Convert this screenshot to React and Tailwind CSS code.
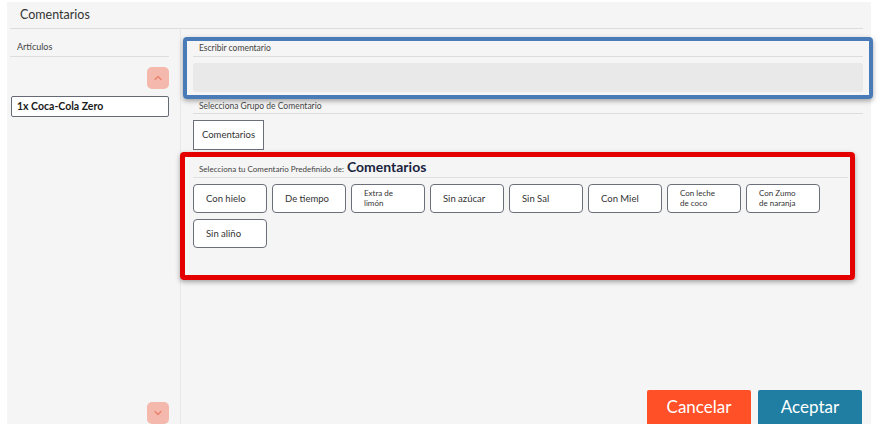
const presets = [
  ["Con hielo"],
  ["De tiempo"],
  ["Extra de", "limón"],
  ["Sin azúcar"],
  ["Sin Sal"],
  ["Con Miel"],
  ["Con leche", "de coco"],
  ["Con Zumo", "de naranja"],
  ["Sin aliño"],
];

function Chevron({ down }) {
  return (
    <svg width="10" height="6" viewBox="0 0 10 6" fill="none">
      <path
        d={down ? "M2 1.5 L5 4.5 L8 1.5" : "M2 4.5 L5 1.5 L8 4.5"}
        stroke="#e8806c"
        strokeWidth="1.3"
        strokeLinecap="round"
        strokeLinejoin="round"
      />
    </svg>
  );
}

export default function App() {
  return (
    <div
      className="min-h-[432px] bg-white pt-[2px] pl-[7px]"
      style={{ fontFamily: "Lato, 'Noto Sans', sans-serif" }}
    >
      <div className="w-[864px] h-[422px] bg-[#f5f5f5] flex flex-col text-[#333]">
        {/* Header */}
        <div className="ml-[3px] mr-[8px] h-[27px] border-b border-[#dddddd] pl-[10px] flex items-center">
          <span className="text-[12.5px]">Comentarios</span>
        </div>

        <div className="flex flex-1 min-h-0">
          {/* Left column - articles */}
          <div className="w-[174px] border-r border-[#e8e8e8] pl-[3px] pr-[11px] flex flex-col">
            <div className="h-[28px] border-b border-[#dddddd] flex items-end pb-[3px] pl-[7px]">
              <span className="text-[9px] leading-[12px] text-[#444]">Artículos</span>
            </div>
            <button className="mt-[10px] ml-auto w-[22px] h-[22px] rounded-[5px] bg-[#f4b8ad] flex items-center justify-center">
              <Chevron />
            </button>
            <div className="mt-[7px] ml-[1px] h-[21px] bg-white border border-[#666a75] rounded-[2px] flex items-center pl-[5px]">
              <span className="text-[10.5px] font-bold text-[#1a1a1a]">1x Coca-Cola Zero</span>
            </div>
            <button className="mt-auto ml-auto w-[22px] h-[22px] rounded-[5px] bg-[#f4b8ad] flex items-center justify-center">
              <Chevron down />
            </button>
          </div>

          {/* Right column */}
          <div className="flex-1 pl-[12px] pr-[8px] pt-[8px] flex flex-col">
            {/* Write comment (highlighted) */}
            <div className="-ml-[10px] -mr-[10px] border-[4px] border-[#4a7bb9] rounded-[4px] px-[6px] pb-[3px] shadow-[0_2px_5px_rgba(0,0,0,0.35)]">
              <div className="h-[16px] border-b border-[#dddddd] flex items-center pl-[6px]">
                <span className="text-[8.5px] text-[#444]">Escribir comentario</span>
              </div>
              <div className="mt-[6px] h-[29px] bg-[#e9e9ea] rounded-[3px]"></div>
            </div>

            <div className="h-[15px] border-b border-[#dddddd] flex items-center pl-[6px]">
              <span className="text-[8.5px] text-[#444]">Selecciona Grupo de Comentario</span>
            </div>
            <div className="mt-[6px]">
              <button className="w-[71px] h-[30px] bg-white border border-[#6b6f7a] text-[9.5px] text-[#333]">
                Comentarios
              </button>
            </div>

            {/* Predefined comments (highlighted) */}
            <div className="mt-[2px] -ml-[13px] mr-[8px] border-[5px] border-[#e50000] rounded-[4px] pl-[8px] pr-[2px] pb-[27px] shadow-[0_2px_5px_rgba(0,0,0,0.35)]">
              <div className="h-[21px] border-b border-[#e0e0e0] flex items-end pb-[2px] pl-[6px] gap-[3px]">
                <span className="text-[8px] text-[#444] leading-[12px]">
                  Selecciona tu Comentario Predefinido de:
                </span>
                <span className="text-[14px] font-bold text-[#1b2440] leading-[17px]">Comentarios</span>
              </div>
              <div className="mt-[6px] grid grid-cols-[repeat(8,74px)] gap-x-[5px] gap-y-[6px]">
                {presets.map((p, i) => (
                  <button
                    key={i}
                    className="h-[29px] bg-white border border-[#6b6f7a] rounded-[4px] flex flex-col justify-center items-start pl-[12px] text-left text-[#333]"
                  >
                    {p.length === 1 ? (
                      <span className="text-[9.5px]">{p[0]}</span>
                    ) : (
                      <span className="text-[8px] leading-[10px] -mt-[2px]">
                        {p[0]}
                        <br />
                        {p[1]}
                      </span>
                    )}
                  </button>
                ))}
              </div>
            </div>

            {/* Actions */}
            <div className="mt-auto flex justify-end gap-[7px] pr-[1px]">
              <button className="w-[104px] h-[34px] bg-[#ff5028] text-white text-[17px] rounded-t-[2px]">
                Cancelar
              </button>
              <button className="w-[104px] h-[34px] bg-[#1f7ea1] text-white text-[17px] rounded-t-[2px]">
                Aceptar
              </button>
            </div>
          </div>
        </div>
      </div>
    </div>
  );
}
